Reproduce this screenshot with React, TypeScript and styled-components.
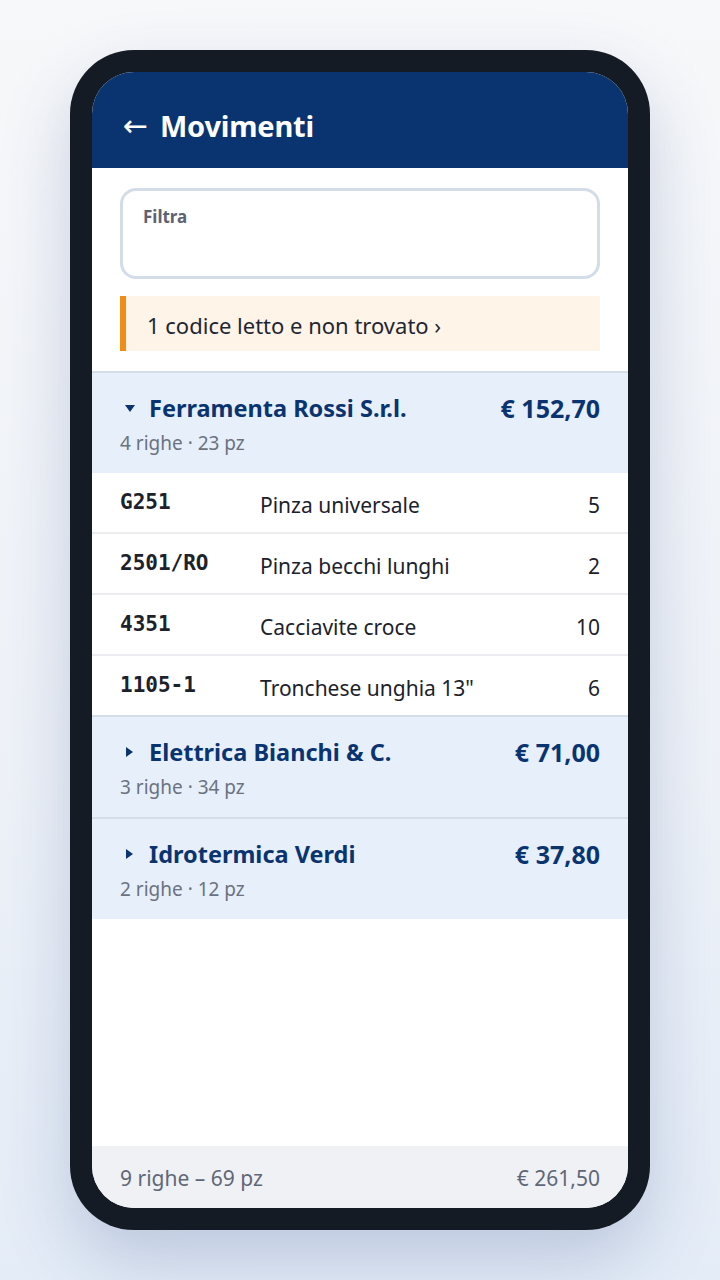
import React from "react";
import styled, { createGlobalStyle } from "styled-components";

const Global = createGlobalStyle`
  html, body { margin: 0; padding: 0; }
  body {
    font-family: "Noto Sans", "Open Sans", sans-serif;
    background: linear-gradient(180deg, #f7f8fa 0%, #eef2f8 60%, #e4ecf7 100%);
    min-height: 1280px;
  }
  * { box-sizing: border-box; }
`;

const Page = styled.div`
  display: flex;
  justify-content: center;
  padding: 50px 70px 50px;
`;

const Phone = styled.div`
  width: 580px;
  height: 1180px;
  background: #151b24;
  border-radius: 64px;
  padding: 22px;
  box-shadow: 0 30px 70px rgba(40, 70, 130, 0.22);
`;

const Screen = styled.div`
  height: 100%;
  background: #ffffff;
  border-radius: 42px;
  overflow: hidden;
  display: flex;
  flex-direction: column;
`;

const Header = styled.header`
  height: 96px;
  flex: none;
  background: #0a3470;
  color: #fff;
  display: flex;
  align-items: center;
  padding: 10px 31px 0;
`;

const Title = styled.h1`
  margin: 0;
  font-size: 29px;
  font-weight: 700;
  line-height: 1;
  letter-spacing: -0.2px;
  display: flex;
  align-items: center;
`;

const BackArrow = styled.span`
  font-family: "DejaVu Sans", sans-serif;
  font-weight: 400;
  font-size: 30px;
  margin-right: 12px;
  position: relative;
  top: 1px;
`;

const Body = styled.div`
  flex: 1;
  display: flex;
  flex-direction: column;
`;

const Top = styled.div`
  padding: 20px 28px 20px;
  display: flex;
  flex-direction: column;
  gap: 17px;
`;

const FilterBox = styled.div`
  height: 91px;
  border: 3px solid #d3dce9;
  border-radius: 16px;
  padding: 15px 20px;
`;

const FilterLabel = styled.div`
  font-size: 17px;
  font-weight: 700;
  color: #5b6373;
  line-height: 22px;
`;

const Alert = styled.div`
  height: 55px;
  background: #fff4e7;
  border-left: 6px solid #f28c18;
  display: flex;
  align-items: center;
  padding-left: 21px;
  padding-top: 2px;
  font-size: 22px;
  color: #1f2633;
`;

const Group = styled.section`
  border-top: 2px solid #d5dde9;
`;

const GroupHead = styled.div`
  background: #e7effa;
  padding: 20px 28px 18px;
`;

const GroupLine = styled.div`
  display: flex;
  justify-content: space-between;
  align-items: center;
  height: 30px;
  color: #0a3470;
  font-weight: 700;
`;

const GroupName = styled.div`
  display: flex;
  align-items: center;
  gap: 9px;
  font-size: 23.5px;
`;

const Total = styled.span`
  font-size: 25px;
`;

const CaretBox = styled.span`
  width: 20px;
  display: flex;
  justify-content: center;
  align-items: center;
`;

const Caret = styled.span<{ $open?: boolean }>`
  display: block;
  width: 0;
  height: 0;
  ${(p) =>
    p.$open
      ? `border-left: 5px solid transparent; border-right: 5px solid transparent; border-top: 7px solid #0a3470;`
      : `border-top: 5px solid transparent; border-bottom: 5px solid transparent; border-left: 7px solid #0a3470; margin-left: -1px;`}
`;

const GroupSub = styled.div`
  margin-top: 8px;
  font-size: 19px;
  line-height: 24px;
  color: #6b7280;
`;

const Row = styled.div`
  display: grid;
  grid-template-columns: 140px 1fr auto;
  align-items: flex-start;
  padding: 17px 28px 13px;
  border-bottom: 2px solid #eaecef;
  &:last-child {
    border-bottom: none;
  }
`;

const Code = styled.span`
  font-family: "DejaVu Sans Mono", "Liberation Mono", monospace;
  font-weight: 700;
  font-size: 21px;
  line-height: 24px;
  color: #1c222c;
`;

const Desc = styled.span`
  font-size: 21px;
  line-height: 27px;
  padding-top: 2px;
  color: #1c222c;
`;

const Qty = styled(Desc)`
  text-align: right;
`;

const Spacer = styled.div`
  flex: 1;
`;

const Footer = styled.footer`
  height: 62px;
  flex: none;
  background: #eff1f5;
  display: flex;
  justify-content: space-between;
  align-items: center;
  padding: 2px 28px 0;
  font-size: 21px;
  color: #5f6777;
`;

type Item = { code: string; desc: string; qty: number };
type G = { name: string; total: string; sub: string; open?: boolean; items?: Item[] };

const groups: G[] = [
  {
    name: "Ferramenta Rossi S.r.l.",
    total: "€ 152,70",
    sub: "4 righe · 23 pz",
    open: true,
    items: [
      { code: "G251", desc: "Pinza universale", qty: 5 },
      { code: "2501/RO", desc: "Pinza becchi lunghi", qty: 2 },
      { code: "4351", desc: "Cacciavite croce", qty: 10 },
      { code: "1105-1", desc: 'Tronchese unghia 13"', qty: 6 },
    ],
  },
  { name: "Elettrica Bianchi & C.", total: "€ 71,00", sub: "3 righe · 34 pz" },
  { name: "Idrotermica Verdi", total: "€ 37,80", sub: "2 righe · 12 pz" },
];

export default function App() {
  return (
    <>
      <Global />
      <Page>
        <Phone>
          <Screen>
            <Header>
              <Title>
                <BackArrow>←</BackArrow>
                Movimenti
              </Title>
            </Header>
            <Body>
              <Top>
                <FilterBox>
                  <FilterLabel>Filtra</FilterLabel>
                </FilterBox>
                <Alert>1 codice letto e non trovato ›</Alert>
              </Top>
              {groups.map((g) => (
                <Group key={g.name}>
                  <GroupHead>
                    <GroupLine>
                      <GroupName>
                        <CaretBox>
                          <Caret $open={g.open} />
                        </CaretBox>
                        <span>{g.name}</span>
                      </GroupName>
                      <Total>{g.total}</Total>
                    </GroupLine>
                    <GroupSub>{g.sub}</GroupSub>
                  </GroupHead>
                  {g.items?.map((it) => (
                    <Row key={it.code}>
                      <Code>{it.code}</Code>
                      <Desc>{it.desc}</Desc>
                      <Qty>{it.qty}</Qty>
                    </Row>
                  ))}
                </Group>
              ))}
              <Spacer />
              <Footer>
                <span>9 righe – 69 pz</span>
                <span>€ 261,50</span>
              </Footer>
            </Body>
          </Screen>
        </Phone>
      </Page>
    </>
  );
}
